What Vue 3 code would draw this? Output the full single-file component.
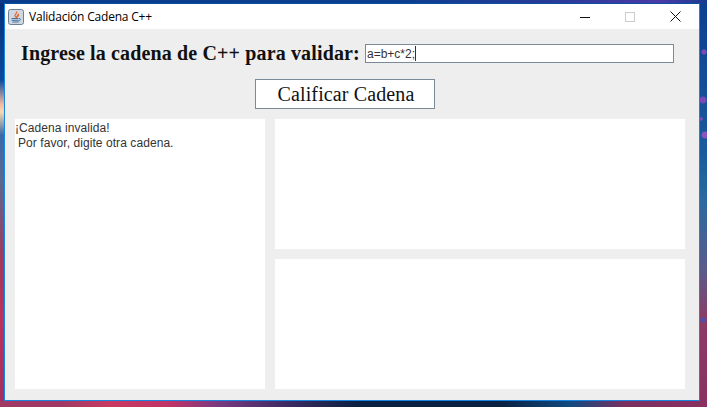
<script setup>
const title = 'Validación Cadena C++'
const value = 'a=b+c*2;'
</script>

<template>
  <div class="desktop">
    <div class="window">
      <header class="titlebar">
        <svg class="app-icon" width="16" height="16" viewBox="0 0 16 16">
          <rect x="0.5" y="0.5" width="15" height="15" rx="2" fill="#cfd7e1" stroke="#6f8095" />
          <path d="M8.5 2.500C10 4 6.500 5 7 6.800c.2.800 1 1.200 1.400 1.700-.2-1.400 2.600-2.200 1.600-3.600 1.600 1.200-.6 2.600-.9 3.600" fill="none" stroke="#e8662c" stroke-width="1.200" />
          <path d="M3.500 9.500h7M3.500 11.300h7M4.500 13h6" fill="none" stroke="#46709c" stroke-width="1" />
          <path d="M11 9.500c2 0 2 2-.5 2.500" fill="none" stroke="#46709c" stroke-width="1" />
        </svg>
        <span class="title">{{ title }}</span>
        <div class="controls">
          <svg class="ctl" width="10" height="10" viewBox="0 0 10 10"><path d="M0 5.500h10" stroke="#111" /></svg>
          <svg class="ctl" width="10" height="10" viewBox="0 0 10 10"><rect x="0.500" y="0.500" width="9" height="9" fill="none" stroke="#ccc" /></svg>
          <svg class="ctl" width="11" height="11" viewBox="0 0 11 11"><path d="M.5.500l10 10M10.500.500l-10 10" stroke="#111" fill="none" /></svg>
        </div>
      </header>
      <main class="content">
        <div class="form-row">
          <label class="prompt">Ingrese la cadena de C++ para validar:</label>
          <div class="field"><span>{{ value }}</span><i class="caret"></i></div>
        </div>
        <div class="action-row">
          <button class="submit" type="button">Calificar Cadena</button>
        </div>
        <div class="panels">
          <div class="panel panel-left">
            <div>¡Cadena invalida!</div>
            <div class="indent">Por favor, digite otra cadena.</div>
          </div>
          <div class="panel"></div>
          <div class="panel"></div>
        </div>
      </main>
    </div>
  </div>
</template>

<style>
html, body { margin: 0; overflow: hidden; }
</style>

<style scoped>
.desktop {
  width: 707px;
  height: 407px;
  box-sizing: border-box;
  padding: 3px 7px 6px 4px;
  background-color: #0b3f94;
  background-repeat: no-repeat;
  background-image:
    radial-gradient(circle 3px at 704px 52px, #7a4ab8 0 70%, transparent 100%),
    radial-gradient(circle 4px at 703px 100px, #7a4ab8 0 70%, transparent 100%),
    radial-gradient(circle 2px at 701px 119px, #7a4ab8 0 70%, transparent 100%),
    radial-gradient(circle 4px at 705px 135px, #8a55bd 0 70%, transparent 100%),
    radial-gradient(circle 3px at 703px 320px, #4a4fb0 0 70%, transparent 100%),
    linear-gradient(90deg, #a03a64 0, #a03a64 64px, #c83a60 110px, #c03468 170px, #7a3a80 218px, #3a2a60 290px, #0a2040 360px, #0a2040 500px, #104a80 570px, #7a3060 625px, #8a3060 707px),
    linear-gradient(90deg, #0a3c8c 0, #0c3f90 400px, #2a3a98 560px, #4a3aa8 660px, #1a3a90 707px),
    linear-gradient(180deg, #0c3f92 0, #1a5a9c 150px, #2a6aa0 200px, #5a5a8c 270px, #8a3c66 320px, #8a3060 407px),
    linear-gradient(180deg, #082f78 0, #0a4a9c 80px, #f0b8a0 104px, #f8d8b0 112px, #3a6aa8 135px, #5a6a90 180px, #a03a5c 260px, #b8345f 320px, #a03060 407px);
  background-size:
    100% 100%, 100% 100%, 100% 100%, 100% 100%, 100% 100%,
    100% 6px,
    100% 3px,
    7px 100%,
    4px 100%;
  background-position:
    0 0, 0 0, 0 0, 0 0, 0 0,
    0 100%,
    0 0,
    100% 0,
    0 0;
}
.window {
  position: relative;
  height: 398px;
  box-sizing: border-box;
  border: 1px solid #1a85e0;
  border-top-color: #0c4f9e;
  display: flex;
  flex-direction: column;
  background: #eeeeee;
}
.titlebar {
  height: 25px;
  flex: none;
  background: #fff;
  display: flex;
  align-items: center;
  padding: 0 18px 0 3px;
  font: 12px "Open Sans", "Noto Sans", sans-serif;
  color: #000;
}
.app-icon { margin-top: 1px; }
.title { margin-left: 5px; letter-spacing: -0.2px; }
.controls {
  margin-left: auto;
  display: flex;
  align-items: center;
  gap: 35px;
}
.ctl { display: block; }
.content {
  flex: 1;
  display: flex;
  flex-direction: column;
  padding: 15px 14px 11px 10px;
}
.form-row {
  display: flex;
  align-items: center;
  height: 19px;
  padding-left: 6px;
}
.prompt {
  width: 344px;
  flex: none;
  font: bold 20px "Liberation Serif", serif;
  letter-spacing: 0.14px;
  color: #111;
  white-space: nowrap;
}
.field {
  width: 309px;
  height: 19px;
  box-sizing: border-box;
  background: #fff;
  border: 1px solid #7a8a99;
  display: flex;
  align-items: center;
  padding-left: 1px;
  font: 12px "Liberation Sans", sans-serif;
  color: #333;
}
.caret {
  width: 1px;
  height: 15px;
  background: #333;
}
.action-row {
  display: flex;
  justify-content: center;
  margin-top: 16px;
  padding-right: 10px;
}
.submit {
  width: 180px;
  height: 30px;
  box-sizing: border-box;
  padding: 0 0 0 2px;
  background: #fff;
  border: 1px solid #7a8a99;
  font: 20px "Liberation Serif", serif;
  letter-spacing: 0.12px;
  color: #111;
}
.panels {
  flex: 1;
  margin-top: 10px;
  display: grid;
  grid-template-columns: 250px 410px;
  grid-template-rows: 130px 130px;
  gap: 10px;
}
.panel { background: #fff; }
.panel-left {
  grid-row: 1 / 3;
  font: 12px/15px "Liberation Sans", sans-serif;
  letter-spacing: 0.07px;
  color: #333;
  padding-top: 2px;
}
.indent { padding-left: 3px; }
</style>
